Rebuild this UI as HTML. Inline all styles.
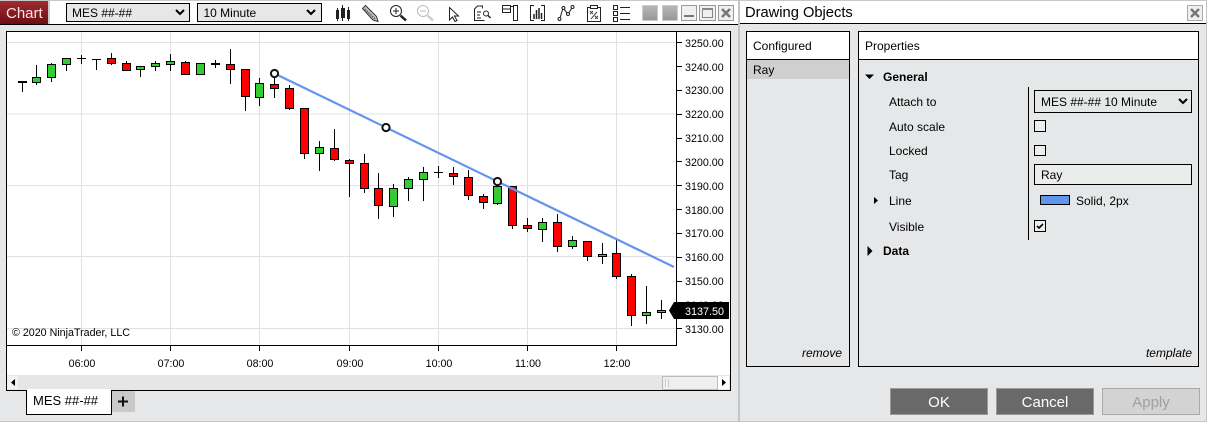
<!DOCTYPE html>
<html><head><meta charset="utf-8"><title>Drawing Objects</title>
<style>
html,body{margin:0;padding:0;background:#e6e7e8;width:1207px;height:422px;overflow:hidden}
svg{display:block}
text{font-family:"Liberation Sans",Arial,sans-serif;font-size:12px;fill:#000}
.p text{font-size:10.700px;fill:#000}
.w{stroke:#000;stroke-width:1;fill:none}
.r{fill:#fe0000;stroke:#000;stroke-width:1}
.g{fill:#32cd32;stroke:#000;stroke-width:1}
.d{stroke:#000;stroke-width:1;fill:none}
.i{fill:none;stroke:#222;stroke-width:1}
</style></head><body>
<svg width="1207" height="422" viewBox="0 0 1207 422" xmlns="http://www.w3.org/2000/svg">
<defs>
<linearGradient id="red" x1="0" y1="0" x2="0" y2="1"><stop offset="0" stop-color="#a02a30"/><stop offset="1" stop-color="#6e0e14"/></linearGradient>
<linearGradient id="gs" x1="0" y1="0" x2="0" y2="1"><stop offset="0" stop-color="#b8b6b6"/><stop offset="1" stop-color="#989696"/></linearGradient>
</defs>
<rect width="1207" height="422" fill="#e6e7e8"/>
<!-- toolbar -->
<rect x="0" y="0" width="738" height="24" fill="#fff"/>
<rect x="0" y="0" width="738" height="1" fill="#c8c8c8"/>
<rect x="0" y="24" width="738" height="1" fill="#000"/>
<rect x="0" y="1" width="48" height="23" fill="url(#red)"/>
<rect x="48" y="1" width="2" height="23" fill="#ccc"/>
<text x="6" y="18" style="font-size:15px;fill:#f4e8e8">Chart</text>
<rect x="66.500" y="3.500" width="123" height="18" fill="#e6e8e8" stroke="#000"/>
<text x="72" y="17" style="font-size:12px">MES ##-##</text>
<path d="M176 10l4 4 4-4" fill="none" stroke="#000" stroke-width="2"/>
<rect x="197.500" y="3.500" width="124" height="18" fill="#e6e8e8" stroke="#000"/>
<text x="203.500" y="17" style="font-size:12px">10 Minute</text>
<path d="M307 10l4 4 4-4" fill="none" stroke="#000" stroke-width="2"/>
<!-- icons -->
<g fill="#222">
<rect x="336" y="10" width="3" height="9"/><rect x="337" y="8" width="1" height="13"/>
<rect x="341" y="8" width="4" height="10"/><rect x="342" y="5" width="1" height="16"/>
<rect x="347" y="10" width="3" height="9"/><rect x="348" y="7" width="1" height="14"/>
</g>
<path d="M362.500 8.500l3-3 11 11 1.500 5-5-1.500z" fill="#c8c8c8" stroke="#333" stroke-width="1"/><path d="M365 9l10 10" stroke="#555" stroke-width="1.500" stroke-dasharray="1.500 1"/>
<circle cx="396" cy="11" r="5.500" class="i"/><path d="M393 11h6M396 8v6" class="i"/><path d="M400.500 15.500l5.500 5" stroke="#222" stroke-width="2.500"/>
<circle cx="423" cy="11" r="5.500" fill="none" stroke="#bbb"/><path d="M420 11h6" stroke="#bbb"/><path d="M427.500 15.500l5.500 5" stroke="#ccc" stroke-width="2.500"/>
<path d="M449.500 7.500v12.500l3-3 2.500 4.500 2-1-2.500-4.500h4z" fill="#fff" stroke="#222"/>
<path d="M482.500 8.500v-2.500h-5l-3 3v11.500h10" class="i"/><path d="M477 12h4M477 15h3M477 18h4" class="i"/><circle cx="486" cy="13.500" r="2.500" class="i"/><path d="M488 15.500l2.500 2.500" stroke="#222" stroke-width="1.500"/>
<rect x="502.500" y="5.500" width="8" height="7" class="i"/><path d="M502.500 9h8M510.500 6.500h3" class="i"/><rect x="513.500" y="5.500" width="4" height="15" class="i"/>
<path d="M534 5.500h-3.500v15h3.500M541 5.500h3.500v15h-3.500" class="i"/><path d="M534 14v5M536.500 10v9M539 8v11M541.500 13v6" stroke="#222" stroke-width="1.500" fill="none"/>
<path d="M560 18l3-10 5 6 4-6" class="i"/><circle cx="559.500" cy="19" r="1.500" fill="#fff" stroke="#222"/><circle cx="563.500" cy="8" r="1.500" fill="#fff" stroke="#222"/><circle cx="568" cy="14" r="1.500" fill="#fff" stroke="#222"/><circle cx="572.500" cy="7" r="1.500" fill="#fff" stroke="#222"/>
<rect x="587.500" y="7.500" width="13" height="14" class="i"/><rect x="590.500" y="5.500" width="7" height="3" fill="#fff" stroke="#222"/><path d="M590 11l3 3M593 11l-3 3M595 16l3 3M598 16l-3 3M591 19l6-7" stroke="#444" fill="none"/>
<rect x="613.500" y="5.500" width="4" height="4" class="i"/><rect x="613.500" y="11.500" width="4" height="4" class="i"/><rect x="613.500" y="17.500" width="4" height="4" class="i"/><path d="M620 7.500h10M620 13.500h10M620 19.500h10" class="i"/>
<!-- window buttons -->
<rect x="642.500" y="5.500" width="15" height="15" fill="url(#gs)" stroke="#ccc"/>
<rect x="662.500" y="5.500" width="15" height="15" fill="url(#gs)" stroke="#ccc"/>
<rect x="681.500" y="5.500" width="15" height="15" fill="#f0f0f0" stroke="#999"/><rect x="684" y="15" width="10" height="2" fill="#777"/>
<rect x="699.500" y="5.500" width="16" height="15" fill="#f0f0f0" stroke="#999"/><rect x="702.500" y="8.500" width="10" height="9" fill="none" stroke="#888"/><rect x="702" y="8" width="11" height="2" fill="#888"/>
<rect x="718.500" y="5.500" width="15" height="15" fill="#f0f0f0" stroke="#999"/><path d="M722 9l8 8M730 9l-8 8" stroke="#777" stroke-width="2.500"/>
<!-- chart frame -->
<rect x="6.500" y="31.500" width="724" height="358.500" fill="#fff" stroke="#000"/>
<!-- grid -->
<g stroke="#e1e1e1" fill="none">
<path d="M81.500 32v313M170.500 32v313M259.500 32v313M349.500 32v313M438.500 32v313M527.500 32v313M616.500 32v313"/>
<path d="M7 42.500h670M7 114h670M7 185.500h670M7 256.500h670M7 328.500h670"/>
</g>
<!-- axes -->
<path d="M676.500 32v313.500M7 345.500h670" stroke="#000" fill="none"/>
<path d="M677 42.500h5M677 66.500h5M677 90.500h5M677 114.500h5M677 138.500h5M677 161.500h5M677 185.500h5M677 209.500h5M677 233.500h5M677 257.500h5M677 281.500h5M677 304.500h5M677 328.500h5" stroke="#000"/>
<path d="M81.500 346v5M170.500 346v5M259.500 346v5M349.500 346v5M438.500 346v5M527.500 346v5M616.500 346v5" stroke="#000"/>
<g class="p">
<text x="685" y="47">3250.00</text><text x="685" y="71">3240.00</text><text x="685" y="94">3230.00</text><text x="685" y="118">3220.00</text><text x="685" y="142">3210.00</text><text x="685" y="166">3200.00</text><text x="685" y="190">3190.00</text><text x="685" y="214">3180.00</text><text x="685" y="237">3170.00</text><text x="685" y="261">3160.00</text><text x="685" y="285">3150.00</text><text x="685" y="309">3140.00</text><text x="685" y="333">3130.00</text>
<g text-anchor="middle"><text x="82" y="367">06:00</text><text x="171" y="367">07:00</text><text x="260" y="367">08:00</text><text x="350" y="367">09:00</text><text x="439" y="367">10:00</text><text x="528" y="367">11:00</text><text x="617" y="367">12:00</text></g>
<text x="12" y="336">© 2020 NinjaTrader, LLC</text>
</g>
<!-- price marker -->
<path d="M669 310.500l5-8.500h55v17h-55z" fill="#000"/>
<text x="685" y="315" style="font-size:10.800px;fill:#fff">3137.50</text>
<!-- candles -->
<path class="w" d="M22.500 82v10M36.500 65v20M51.500 63v19M66.500 64v7M81.500 55v9M96.500 59v11M111.500 53v12M126.500 61v3M140.500 69v8M155.500 61v10M170.500 54v17M185.500 61v2M215.500 60v8M230.500 49v35M245.500 96v15M259.500 78v28M274.500 73v25M289.500 85v25M304.500 153v6M319.500 141v30M334.500 129v32M349.500 159v38M364.500 154v39M378.500 173v46M393.500 184v33M408.500 177v24M423.500 167v34M438.500 166v12M453.500 167v18M468.500 170v30M483.500 194v15M497.500 181v24M512.500 225v4M527.500 218v14M542.500 218v24M557.500 214v38M572.500 236v13M587.500 256v5M602.500 243v21M616.500 239v40M631.500 274v52M646.500 286v38M661.500 300v19"/>
<path d="M18 81.500h9M18 82.500h9M77 58.500h9M92 59.500h9M434 172.500h9M211 63.500h9M211 64.500h9" class="d"/>
<rect class="g" x="32.500" y="77.500" width="8" height="5"/>
<rect class="g" x="47.500" y="64.500" width="8" height="13"/>
<rect class="g" x="62.500" y="58.500" width="8" height="6"/>
<rect class="r" x="107.500" y="58.500" width="8" height="5"/>
<rect class="r" x="122.500" y="63.500" width="8" height="7"/>
<rect class="g" x="136.500" y="66.500" width="8" height="3"/>
<rect class="g" x="151.500" y="63.500" width="8" height="3"/>
<rect class="g" x="166.500" y="61.500" width="8" height="3"/>
<rect class="r" x="181.500" y="62.500" width="8" height="12"/>
<rect class="g" x="196.500" y="63.500" width="8" height="11"/>
<rect class="r" x="226.500" y="64.500" width="8" height="5"/>
<rect class="r" x="241.500" y="69.500" width="8" height="27"/>
<rect class="g" x="255.500" y="83.500" width="8" height="14"/>
<rect class="r" x="270.500" y="84.500" width="8" height="4"/>
<rect class="r" x="285.500" y="88.500" width="8" height="20"/>
<rect class="r" x="300.500" y="108.500" width="8" height="45"/>
<rect class="g" x="315.500" y="147.500" width="8" height="6"/>
<rect class="r" x="330.500" y="148.500" width="8" height="11"/>
<rect class="r" x="345.500" y="160.500" width="8" height="3"/>
<rect class="r" x="360.500" y="163.500" width="8" height="25"/>
<rect class="r" x="374.500" y="188.500" width="8" height="17"/>
<rect class="g" x="389.500" y="188.500" width="8" height="18"/>
<rect class="g" x="404.500" y="179.500" width="8" height="9"/>
<rect class="g" x="419.500" y="172.500" width="8" height="7"/>
<rect class="r" x="449.500" y="173.500" width="8" height="3"/>
<rect class="r" x="464.500" y="177.500" width="8" height="18"/>
<rect class="r" x="479.500" y="196.500" width="8" height="6"/>
<rect class="g" x="493.500" y="186.500" width="8" height="17"/>
<rect class="r" x="508.500" y="186.500" width="8" height="39"/>
<rect class="r" x="523.500" y="225.500" width="8" height="3"/>
<rect class="g" x="538.500" y="222.500" width="8" height="7"/>
<rect class="r" x="553.500" y="222.500" width="8" height="24"/>
<rect class="g" x="568.500" y="240.500" width="8" height="6"/>
<rect class="r" x="583.500" y="241.500" width="8" height="15"/>
<rect class="g" x="598.500" y="254.500" width="8" height="2"/>
<rect class="r" x="612.500" y="253.500" width="8" height="23"/>
<rect class="r" x="627.500" y="276.500" width="8" height="39"/>
<rect class="g" x="642.500" y="312.500" width="8" height="3"/>
<rect class="g" x="657.500" y="310.500" width="8" height="2"/>
<!-- ray -->
<path d="M274.500 73.500L674 267" stroke="#6495ed" stroke-width="2.200" fill="none"/>
<g fill="#fff" stroke="#111" stroke-width="2">
<circle cx="274.500" cy="73.500" r="3.600"/><circle cx="386" cy="127.500" r="3.600"/><circle cx="497.500" cy="181.500" r="3.600"/>
</g>
<!-- scrollbar -->
<rect x="7" y="375" width="723" height="15" fill="#e6e6e6"/>
<rect x="7" y="376" width="11" height="13" fill="#f2f2f2"/>
<path d="M11 382.500l4-3.500v7z" fill="#000"/>
<rect x="662.500" y="376.500" width="55" height="13" fill="#efefef" stroke="#bbb"/>
<path d="M665.500 379v8M668.500 379v8" stroke="#ccc"/>
<rect x="718" y="376" width="11" height="13" fill="#fff"/>
<path d="M726 382.500l-4-3.500v7z" fill="#000"/>
<rect x="6" y="390" width="725" height="1" fill="#000"/>
<!-- tabs -->
<rect x="26.500" y="390.500" width="85" height="24" fill="#fff" stroke="#000"/>
<rect x="27" y="389" width="84" height="3" fill="#fff"/>
<text x="33" y="405" style="font-size:13px">MES ##-##</text>
<rect x="112" y="391" width="23" height="21" fill="#c9c9c9"/>
<path d="M118 401.500h10M123 396.500v10" stroke="#111" stroke-width="2"/>
<rect x="0" y="421" width="738" height="1" fill="#c4c4c4"/>
<!-- separator -->
<rect x="738" y="0" width="2" height="422" fill="#c4c4c4"/>
<!-- dialog -->
<rect x="740" y="0" width="467" height="1" fill="#c8c8c8"/>
<rect x="740" y="1" width="466" height="22" fill="#fff"/>
<rect x="740" y="23" width="466" height="1" fill="#000"/>
<rect x="1206" y="0" width="1" height="422" fill="#c4c4c4"/>
<rect x="740" y="421" width="467" height="1" fill="#c4c4c4"/>
<text x="745" y="17" style="font-size:14.700px">Drawing Objects</text>
<rect x="1187.500" y="5.500" width="15" height="15" fill="#f0f0f0" stroke="#aaa"/>
<path d="M1191 9l8 8M1199 9l-8 8" stroke="#777" stroke-width="2.500"/>
<!-- configured -->
<rect x="746.500" y="31.500" width="103" height="335" fill="#e6e7e8" stroke="#000"/>
<rect x="747" y="32" width="102" height="27" fill="#fff"/>
<rect x="747" y="59" width="102" height="1" fill="#000"/>
<rect x="747" y="60" width="102" height="19" fill="#cfcfcf"/>
<text x="753" y="50">Configured</text>
<text x="753" y="74">Ray</text>
<text x="842" y="357" text-anchor="end" style="font-style:italic">remove</text>
<!-- properties -->
<rect x="858.500" y="31.500" width="340" height="335" fill="#e6e7e8" stroke="#000"/>
<rect x="859" y="32" width="339" height="27" fill="#fff"/>
<rect x="859" y="59" width="339" height="1" fill="#000"/>
<text x="865" y="50">Properties</text>
<path d="M865 74.500h9l-4.500 4.500z" fill="#000"/>
<text x="883" y="81" style="font-weight:bold">General</text>
<text x="889" y="106">Attach to</text>
<text x="889" y="131">Auto scale</text>
<text x="889" y="155">Locked</text>
<text x="889" y="179">Tag</text>
<path d="M874 197l4 3.500-4 3.500z" fill="#000"/>
<text x="889" y="205">Line</text>
<text x="889" y="231">Visible</text>
<path d="M867.500 246l5 5-5 5z" fill="#000"/>
<text x="883" y="255" style="font-weight:bold">Data</text>
<rect x="1028" y="87" width="1" height="153" fill="#000"/>
<rect x="1034.500" y="90.500" width="157" height="22" fill="#e6e8e8" stroke="#000"/>
<text x="1041" y="106">MES ##-## 10 Minute</text>
<path d="M1179 99l4 4 4-4" fill="none" stroke="#000" stroke-width="2"/>
<rect x="1034.500" y="120.500" width="11" height="11" fill="#eceeec" stroke="#000"/>
<rect x="1034.500" y="145.500" width="11" height="10" fill="#eceeec" stroke="#000"/>
<rect x="1034.500" y="164.500" width="157" height="20" fill="#ebedeb" stroke="#000"/>
<text x="1041" y="179">Ray</text>
<rect x="1040.500" y="195.500" width="29" height="9" fill="#6495ed" stroke="#000"/>
<text x="1076" y="205">Solid, 2px</text>
<rect x="1034.500" y="220.500" width="11" height="11" fill="#eceeec" stroke="#000"/>
<path d="M1037 226l2 2 4-4" fill="none" stroke="#000" stroke-width="1.600"/>
<text x="1192" y="357" text-anchor="end" style="font-style:italic">template</text>
<!-- buttons -->
<rect x="890.500" y="388.500" width="97" height="26" fill="#696969" stroke="#9a9a9a"/>
<text x="939" y="407" text-anchor="middle" style="font-size:15px;fill:#fff">OK</text>
<rect x="996.500" y="388.500" width="97" height="26" fill="#696969" stroke="#9a9a9a"/>
<text x="1045" y="407" text-anchor="middle" style="font-size:15px;fill:#fff">Cancel</text>
<rect x="1102.500" y="388.500" width="97" height="26" fill="#d3d3d3" stroke="#a9a9a9"/>
<text x="1151" y="407" text-anchor="middle" style="font-size:15px;fill:#a0a0a0">Apply</text>
</svg>
</body></html>
